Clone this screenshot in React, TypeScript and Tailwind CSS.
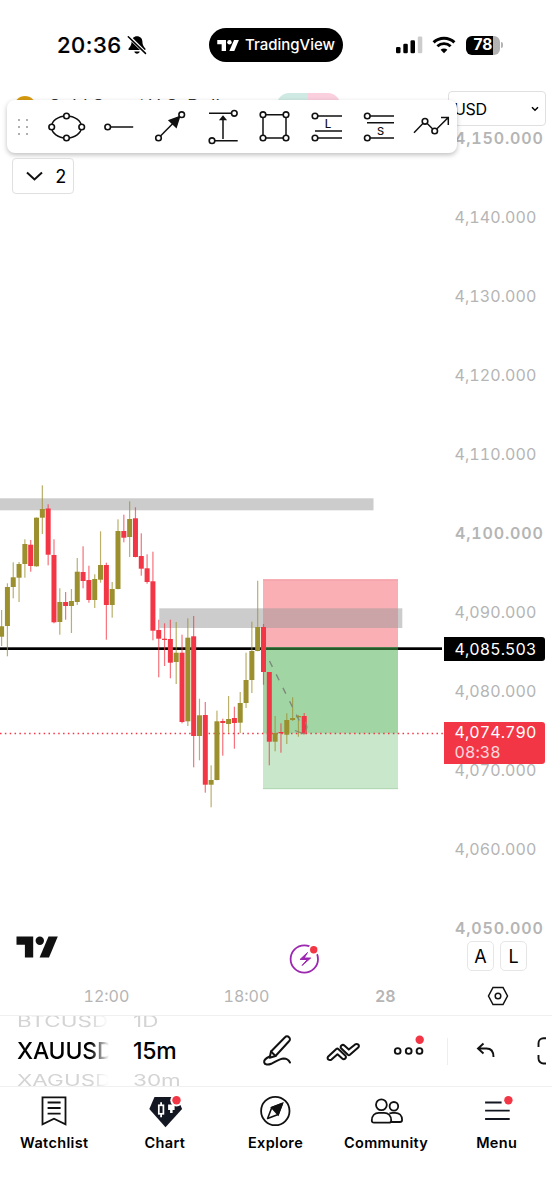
import type { ReactNode } from "react";

type Candle = [high: number, top: number, bottom: number, low: number, up: 0 | 1];

const CANDLES: Candle[] = [
  [610, 626.3, 636.7, 646, 1],
  [583.3, 587, 626, 656.3, 1],
  [562.3, 577.3, 587, 598.3, 1],
  [562, 564, 577.7, 602, 1],
  [539.3, 544, 564, 577.7, 1],
  [540, 544.7, 566, 571.7, 0],
  [517.3, 517.7, 566.3, 566.7, 1],
  [485.3, 509, 517.7, 534, 1],
  [504.3, 508.5, 554.7, 565.3, 0],
  [539.3, 555, 622.3, 623.3, 0],
  [588.3, 602, 622, 634.7, 1],
  [592, 602, 606, 619.7, 0],
  [589, 601, 606, 633, 1],
  [558, 571.7, 602, 605, 1],
  [546.3, 572, 581, 588.3, 0],
  [565.7, 580, 600, 602.7, 0],
  [574.3, 579, 600, 608, 1],
  [531.3, 565, 579.7, 582.7, 1],
  [562.7, 565, 605, 639.7, 0],
  [582, 589, 605, 617.7, 1],
  [519.3, 531, 589, 589.3, 1],
  [514.7, 531, 537.7, 542.3, 0],
  [501.3, 519, 537, 557, 1],
  [507.3, 518.3, 557, 557.3, 0],
  [533.3, 556, 568.7, 575.7, 0],
  [554.3, 568.3, 582, 583.7, 0],
  [551.7, 581.3, 630.7, 640.3, 0],
  [619.7, 630, 638.7, 677.3, 0],
  [623.3, 638.7, 640, 666, 0],
  [619.7, 639, 662.7, 678.3, 0],
  [622, 652.7, 662, 684, 1],
  [634.7, 652.7, 722, 723.3, 0],
  [618.3, 637.7, 721.3, 726, 1],
  [616, 636.3, 736, 767.3, 0],
  [698.7, 715.3, 736, 760.3, 1],
  [702, 715, 784.7, 792.7, 0],
  [765.3, 780, 784.7, 807.3, 1],
  [710.7, 721.3, 780, 780.3, 1],
  [718.7, 721, 723, 755.7, 0],
  [696, 719, 724, 732.7, 1],
  [706.7, 718, 723, 748.7, 0],
  [692, 703, 722.7, 733, 1],
  [652.7, 680, 703, 708, 1],
  [621.7, 651, 680, 693, 1],
  [580.7, 627, 651, 651.3, 1],
  [624, 627, 672, 684.7, 0],
  [672, 672, 741.7, 765.3, 0],
  [716, 733, 741.7, 751.3, 1],
  [723.3, 732, 733.3, 752.7, 0],
  [713.3, 720, 734.7, 744, 1],
  [697.3, 718, 720, 721, 1],
  [715, 716, 717.3, 736.7, 1],
  [713, 716, 733.5, 734.5, 0],
];

const PRICES = [
  { label: "4,150.000", major: true },
  { label: "4,140.000" },
  { label: "4,130.000" },
  { label: "4,120.000" },
  { label: "4,110.000" },
  { label: "4,100.000", major: true },
  { label: "4,090.000" },
  { label: "4,080.000" },
  { label: "4,070.000" },
  { label: "4,060.000" },
  { label: "4,050.000", major: true },
];

function TvLogo({ className }: { className: string }) {
  return (
    <svg viewBox="0 0 41 21" className={className} fill="currentColor">
      <path d="M0 0h16.7v21H8.4V8.2H0z" />
      <circle cx="23.3" cy="4.3" r="4.2" />
      <path d="M32 0h9.3l-8.8 21h-9.4z" />
    </svg>
  );
}

function StatusBar() {
  return (
    <header className="flex h-[90px] shrink-0 items-center pl-[57px]">
      <span className="w-[66px] text-[22px] leading-none font-medium tracking-[0.5px] [-webkit-text-stroke:0.2px_black]">20:36</span>
      <svg viewBox="0 0 22 22" className="ml-[3px] h-[22px] w-[22px]">
        <path d="M11 2.200c-3.300 0-5.300 2.300-5.400 5.400-.1 4-1.600 5.300-2.800 6.700-.7.900-.4 1.800.7 1.800h15c1.100 0 1.400-.9.7-1.800-1.200-1.400-2.700-2.700-2.800-6.700C16.300 4.500 14.300 2.200 11 2.200z" />
        <path d="M8.300 17.500h5.400c-.3 1.400-1.300 2.200-2.700 2.200s-2.400-.8-2.700-2.200z" />
        <path d="M2.500 2.300l17.500 17.300" stroke="#fff" strokeWidth="3.400" />
        <path d="M2.300 2.800l17.200 16.600" stroke="#000" strokeWidth="1.500" strokeLinecap="round" />
      </svg>
      <div className="ml-[61px] flex h-[34px] w-[134px] items-center rounded-full bg-black pl-2 text-white">
        <TvLogo className="h-[11px] w-[22px]" />
        <span className="ml-1.5 text-[15px] font-medium whitespace-nowrap">TradingView</span>
      </div>
      <svg viewBox="0 0 27 18" className="ml-[53px] h-[18px] w-[27px]">
        <rect x="0" y="11" width="4.500" height="6.300" rx="1.300" />
        <rect x="7.300" y="7.800" width="4.500" height="9.500" rx="1.300" />
        <rect x="14.500" y="4.300" width="4.500" height="13" rx="1.300" />
        <rect x="21.800" y="0.500" width="4.500" height="16.800" rx="1.300" fill="#ccc" />
      </svg>
      <svg viewBox="0 0 24 18" className="ml-[9px] h-[18px] w-[24px]" fill="none" stroke="#000">
        <path d="M1.600 6.400a15 15 0 0 1 20.800 0" strokeWidth="3" />
        <path d="M5.400 10.300a9.600 9.600 0 0 1 13.200 0" strokeWidth="2.900" />
        <path d="M12 17.300l-3.400-3.500a4.900 4.900 0 0 1 6.800 0z" fill="#000" stroke="none" />
      </svg>
      <div className="ml-[10px] flex h-[19px] w-[34px] items-center justify-center rounded-[6px] bg-[linear-gradient(to_right,#000_27px,#b3b3b3_27px)] text-[15.500px] leading-none font-bold text-white">
        78
      </div>
      <div className="ml-px h-[6px] w-[2px] rounded-r-full bg-[#b3b3b3]" />
    </header>
  );
}

function Node({ x, y }: { x: number; y: number }) {
  return <circle cx={x} cy={y} r="2.800" fill="#fff" strokeWidth="1.600" />;
}

function Tool({ children }: { children: ReactNode }) {
  return (
    <svg viewBox="0.500 0 52 54" className="h-[54px] w-[52px] shrink-0" fill="none" stroke="#111" strokeWidth="1.500">
      {children}
    </svg>
  );
}

function DrawingToolbar() {
  return (
    <div className="absolute top-[10px] left-[7px] flex h-[53px] w-[450px] rounded-lg bg-white shadow-[0_2px_5px_rgba(0,0,0,0.25)]">
      <div className="flex w-[33.500px] shrink-0 items-center pl-[11px]">
        <div className="grid grid-cols-2 gap-x-[6px] gap-y-[5px]">
          {[0, 1, 2, 3, 4, 5].map((i) => (
            <span key={i} className="h-[2px] w-[2px] bg-[#b0b0b0]" />
          ))}
        </div>
      </div>
      <Tool>
        <ellipse cx="26" cy="27" rx="15" ry="11" />
        <Node x={11.2} y={27} />
        <Node x={41.2} y={27} />
        <Node x={26} y={16} />
        <Node x={26} y={38} />
      </Tool>
      <Tool>
        <path d="M15 27h25.700" />
        <Node x={15.2} y={27} />
      </Tool>
      <Tool>
        <path d="M14 38l23-23.300" />
        <path d="M24.800 20.500l10.200-3.700-3.300 10.400z" fill="#111" />
        <Node x={14} y={38} />
        <Node x={37.2} y={14.7} />
      </Tool>
      <Tool>
        <path d="M12.500 13.300h25M15.500 40.700h25.700M26.500 39V17" />
        <path d="M24 19.500l2.500-3 2.500 3z" fill="#111" />
        <Node x={37.8} y={13.3} />
        <Node x={15.5} y={40.7} />
      </Tool>
      <Tool>
        <path d="M14.500 14.700h23V38h-23z" />
        <Node x={14.5} y={14.7} />
        <Node x={37.5} y={14.7} />
        <Node x={14.5} y={38} />
        <Node x={37.5} y={38} />
      </Tool>
      <Tool>
        <path d="M14.500 16h27M14.500 31h27M14.500 38h27" />
        <Node x={14.5} y={16} />
        <Node x={14.5} y={38} />
        <text x="27.500" y="27.700" textAnchor="middle" fontSize="11.500" fontWeight="500" fill="#111" stroke="none">L</text>
      </Tool>
      <Tool>
        <path d="M14.500 16h27M14.500 22.700h27M14.500 38h27" />
        <Node x={14.8} y={16} />
        <Node x={14.8} y={38} />
        <text x="28" y="34.700" textAnchor="middle" fontSize="11" fontWeight="500" fill="#111" stroke="none">S</text>
      </Tool>
      <Tool>
        <path d="M9.500 32.700l11-11.400 9.700 9.700 13.300-13.300M36.500 17.500h7.300v7.500" />
        <Node x={20.5} y={21.3} />
        <Node x={30.2} y={31} />
      </Tool>
    </div>
  );
}

function CandleChart() {
  return (
    <svg viewBox="0 90 443 885" className="block h-[885px] w-[443px]">
      <rect x="0" y="647.300" width="442" height="2.700" fill="#000" />

      {/* short position: stop, target, reached part of the target */}
      <rect x="263" y="579.500" width="135" height="67.500" fill="#f23645" fillOpacity="0.4" />
      <rect x="263" y="647" width="135" height="142" fill="#4caf50" fillOpacity="0.3" />
      <rect x="263" y="647" width="135" height="86.300" fill="#4caf50" fillOpacity="0.31" />
      <path d="M263 579.800h135" stroke="#ec8e95" strokeWidth="0.800" />
      <path d="M263 788.700h135" stroke="#a5cfa8" strokeWidth="0.800" />

      {/* supply zones */}
      <rect x="0" y="498.300" width="373.500" height="12" fill="#999" fillOpacity="0.5" />
      <rect x="159.300" y="608.300" width="243" height="19.700" fill="#999" fillOpacity="0.5" />

      <path d="M0 733.500H443" stroke="#f23645" strokeWidth="1.400" strokeDasharray="1.500 3.350" />

      {CANDLES.map(([high, top, bottom, low, up], i) => {
        const x = 1.6 + i * 5.82;
        const color = up ? "#9c8f2e" : "#f23645";
        return (
          <g key={i} fill={color}>
            <rect x={x - 0.6} y={high} width="1.200" height={low - high} fillOpacity="0.700" />
            <rect x={x - 2.5} y={top} width="5" height={Math.max(bottom - top, 1.2)} />
          </g>
        );
      })}

      <path d="M269.500 661L300 722" stroke="#7c8a7c" strokeWidth="1.400" strokeDasharray="6.500 8.500" fill="none" />
      <path d="M295 730.500l9 3.500M305.500 722l1.500 5-2 7" stroke="#8c8a6c" strokeWidth="1.200" fill="none" />

      <g transform="translate(16.500 936.500)" fill="#111">
        <path d="M0 0h16.700v21H8.400V8.200H0z" />
        <circle cx="23.300" cy="4.300" r="4.200" />
        <path d="M32 0h9.300l-8.800 21h-9.400z" />
      </g>

      <circle cx="304.300" cy="959" r="13.700" fill="#fff" stroke="#9c27b0" strokeWidth="1.800" />
      <path d="M307.500 952.500l-7.500 7h7.300l-5.300 6 8.700-7.500h-6.500z" fill="#9c27b0" stroke="#9c27b0" strokeLinejoin="round" />
      <circle cx="313.700" cy="949.700" r="5.700" fill="#fff" />
      <circle cx="313.700" cy="949.700" r="3.700" fill="#f23645" />
    </svg>
  );
}

function ChartPane() {
  return (
    <main className="relative flex h-[925px] shrink-0 tabular-nums">
      <div className="w-[443px]">
        <CandleChart />
        <div className="flex h-[40px] pl-[83.500px] text-[16px] leading-[43px] text-[#b5b5b5]">
          <span className="w-[140px]">12:00</span>
          <span className="w-[151.500px]">18:00</span>
          <span className="font-semibold">28</span>
        </div>
      </div>

      <div className="w-[109px] pt-[9px]">
        {PRICES.map((p) => (
          <div
            key={p.label}
            className={
              p.major
                ? "flex h-[78.950px] items-center pl-3 text-[16px] font-semibold tracking-[0.850px] text-[#b5b5b5]"
                : "flex h-[78.950px] items-center pl-[11.500px] text-[16px] tracking-[0.080px] text-[#b5b5b5]"
            }
          >
            {p.label}
          </div>
        ))}
      </div>

      {/* currency selector */}
      <div className="absolute top-px left-[448px] flex h-[35px] w-[98px] items-center justify-between rounded-[4px] border border-[#e0e0e0] bg-white pr-1.5 pl-[5px] text-[16px] tracking-[-0.300px]">
        USD
        <svg viewBox="0 0 8 6" className="h-[6px] w-[8px]" fill="none" stroke="#000" strokeWidth="1.500">
          <path d="M1 1.200l3 3 3-3" />
        </svg>
      </div>

      {/* last price and level tags */}
      <div className="absolute top-[547px] left-[443.500px] flex h-[23.500px] w-[101.500px] items-center rounded-r-[3px] bg-black pl-[11px] text-[16px] tracking-[0.080px] text-white">
        4,085.503
      </div>
      <div className="absolute top-[632px] left-[443.500px] h-[42px] w-[101.500px] rounded-r-[3px] bg-[#f23645] pt-px pl-[11px] text-[16px] leading-[19.500px] tracking-[0.080px] text-white">
        <p>4,074.790</p>
        <p className="text-white/80">08:38</p>
      </div>

      <div className="absolute top-[851px] left-[467px] flex gap-[6px] text-[18px]">
        <span className="flex h-[30px] w-[27px] items-center justify-center rounded-[5px] border border-[#e6e6e6] bg-white">A</span>
        <span className="flex h-[30px] w-[27px] items-center justify-center rounded-[5px] border border-[#e6e6e6] bg-white">L</span>
      </div>
      <svg viewBox="0 0 22 20" className="absolute top-[896px] left-[487px] h-[20px] w-[22px]" fill="none" stroke="#111" strokeWidth="1.500">
        <path d="M6 1.500h10l4.500 8.500-4.500 8.500H6L1.500 10z" />
        <circle cx="11" cy="10" r="2.800" />
      </svg>

      {/* symbol legend, mostly behind the toolbar */}
      <div className="absolute top-[3px] left-[14px] flex h-[24px] w-[326px] items-center">
        <span className="mt-1 h-[22px] w-[22px] rounded-full bg-[#d69a10]" />
        <span className="mt-[3px] ml-3 text-[18px] whitespace-nowrap text-[#333]">Gold Spot / U.S. Dollar</span>
        <span className="ml-auto h-full w-[63px] rounded-full bg-[linear-gradient(to_right,#cfe9e3_50%,#fbd0de_50%)]" />
      </div>
      <DrawingToolbar />
      <button className="absolute top-[68px] left-[12px] flex h-[36px] w-[62px] items-center gap-[12px] rounded-[4px] border-[1.500px] border-[#e0e0e0] bg-white pl-[13px] text-[18px]">
        <svg viewBox="0 0 17 10" className="h-[10px] w-[17px]" fill="none" stroke="#111" strokeWidth="2">
          <path d="M1 1.500l7.500 7 7.500-7" />
        </svg>
        2
      </button>
    </main>
  );
}

function Picker({ items, className }: { items: string[]; className: string }) {
  return (
    <div className={className}>
      <span className="block h-[14px] origin-center scale-y-[0.680] text-[22.500px] leading-[10px] text-[#d4d4d4]">{items[0]}</span>
      <span className="block h-[42px] text-[23px] leading-[42px] font-medium tracking-[-0.200px] text-black">{items[1]}</span>
      <span className="block h-[15px] origin-center scale-y-[0.680] text-[22.500px] leading-[17px] text-[#d4d4d4]">{items[2]}</span>
    </div>
  );
}

function QuickBar() {
  return (
    <div className="flex h-[71px] shrink-0 overflow-hidden border-t border-[#f0f0f0] pl-[17px]">
      <Picker
        items={["BTCUSD", "XAUUSD", "XAGUSD"]}
        className="h-[70px] w-[92px] shrink-0 mask-r-from-80% mask-r-to-100%"
      />
      <Picker items={["1D", "15m", "30m"]} className="ml-[24px] h-[70px] w-[60px] shrink-0" />
      <div className="flex items-center pl-[68px]">
        <svg viewBox="0 0 34 34" className="h-[34px] w-[34px] shrink-0" fill="none" stroke="#111" strokeWidth="2" strokeLinecap="round" strokeLinejoin="round">
          <path d="M10 17.500L24 3.300a2.600 2.600 0 0 1 4 0 2.600 2.600 0 0 1 0 4L14.500 22l-5.800 1.700z" />
          <path d="M10 17.500l4.500 4.500" />
          <path d="M8.700 22.500c-3.500 1.500-6 3.500-5.500 6 .5 2.500 4 2.500 7 1.300 4.500-2 8-5 12.500-5.300 3 0 5 1.500 6.300 4" />
        </svg>
        <svg viewBox="0 0 34 34" className="ml-[31px] h-[34px] w-[34px] shrink-0" fill="none" stroke="#111" strokeWidth="2" strokeLinejoin="round">
          <path d="M2 22.700l8.300-7.700q1-.8 2 0l7.200 6.800q1 1.500-.3 2.800-1.600 1.200-3 0l-4.700-4.400-6 5.400q-1.700 1-3.200-.1-1.200-1.300-.3-2.800z" />
          <path d="M32.500 13.200l-8.600 7.600q-1 .8-2 0l-6.800-6.500q-1-1.500.3-2.800 1.600-1.200 3 0l4.400 4.100 6.300-5.200q1.700-1 3.100.1 1.200 1.300.3 2.700z" />
        </svg>
        <svg viewBox="0 0 34 34" className="ml-[33px] h-[34px] w-[34px] shrink-0" fill="none" stroke="#111" strokeWidth="1.900">
          <circle cx="4.700" cy="17" r="2.900" />
          <circle cx="15.700" cy="17" r="2.900" />
          <circle cx="26.500" cy="17" r="2.900" />
          <circle cx="26.700" cy="5.700" r="4.200" fill="#f23645" stroke="none" />
        </svg>
        <span className="ml-[20px] h-[27px] w-px shrink-0 bg-[#eeeeee]" />
        <svg viewBox="0 0 20 18" className="ml-[28px] h-[18px] w-[20px] shrink-0" fill="none" stroke="#111" strokeWidth="1.900">
          <path d="M7.500 1.500L2 6.500l5.500 5M2 6.500h8.500c4.500 0 7 3 7 8.500" />
        </svg>
        <svg viewBox="0 0 10 28" className="ml-[40px] h-[28px] w-[10px] shrink-0" fill="none" stroke="#111" strokeWidth="1.900">
          <path d="M10 1.300H7.500a5 5 0 0 0-5 5V10M10 26.500H7.500a5 5 0 0 1-5-5V18" />
        </svg>
      </div>
    </div>
  );
}

function Tab({ label, children }: { label: string; children: ReactNode }) {
  return (
    <button className="flex flex-col items-center pt-[7px]">
      <svg viewBox="-0.800 0 36 36" className="h-[36px] w-[36px]" fill="none" stroke="#111" strokeWidth="1.800">
        {children}
      </svg>
      <span className="mt-[3px] text-[14.500px] leading-5 font-semibold tracking-[0.350px]">{label}</span>
    </button>
  );
}

function TabBar() {
  return (
    <nav className="-ml-px grid flex-1 grid-cols-5 items-start border-t border-[#f0f0f0]">
      <Tab label="Watchlist">
        <path d="M5.700 3.300h23v27l-11.500-5.500-11.500 5.500zM10.800 8.500h13M10.800 14h13M10.800 19.700h13" />
      </Tab>
      <Tab label="Chart">
        <path d="M6.700 3h22.600l5 12L17.700 33.300 1.500 15z" fill="#131722" stroke="none" />
        <path d="M13.300 8.300v15" stroke="#fff" />
        <rect x="11" y="11.300" width="4.600" height="8.500" fill="#131722" stroke="#fff" strokeWidth="1.700" />
        <path d="M20.300 10.500h6.500v5.500h-2v3h-2.500v-3h-2z" fill="#fff" stroke="none" />
        <circle cx="28.700" cy="6.300" r="6.200" fill="#fff" stroke="none" />
        <circle cx="28.700" cy="6.300" r="4.200" fill="#f23645" stroke="none" />
      </Tab>
      <Tab label="Explore">
        <circle cx="17.500" cy="17" r="14.200" />
        <path d="M24.500 9.500L14 13.500 9.800 24.500l10.500-4z" strokeLinejoin="round" strokeWidth="1.600" />
        <path d="M24.500 9.500L14 13.500l6.300 7z" fill="#111" />
      </Tab>
      <Tab label="Community">
        <circle cx="12.600" cy="10.700" r="5.400" />
        <circle cx="25.100" cy="12.300" r="4.300" />
        <path d="M3 26.500c0-5 3-7.700 7-7.700h5.400c4 0 7 2.700 7 7.700 0 1.500-.8 2.200-2.200 2.200h-15c-1.400 0-2.200-.7-2.200-2.200z" />
        <path d="M20.600 19.500c1-.5 2-.7 3.300-.7h2.400c4 0 7 2.700 7 7.200 0 1.300-.8 2-2.200 2h-9.500" />
      </Tab>
      <Tab label="Menu">
        <path d="M5.300 8.500h16.500M5.300 16.700h24.600M5.300 25h24.600" stroke="#131722" />
        <circle cx="28.600" cy="6.300" r="4.200" fill="#f23645" stroke="none" />
      </Tab>
    </nav>
  );
}

export default function App() {
  return (
    <div className="flex h-[1200px] w-[552px] flex-col overflow-hidden bg-white font-['Inter','Liberation_Sans',sans-serif] text-black">
      <StatusBar />
      <ChartPane />
      <QuickBar />
      <TabBar />
    </div>
  );
}
